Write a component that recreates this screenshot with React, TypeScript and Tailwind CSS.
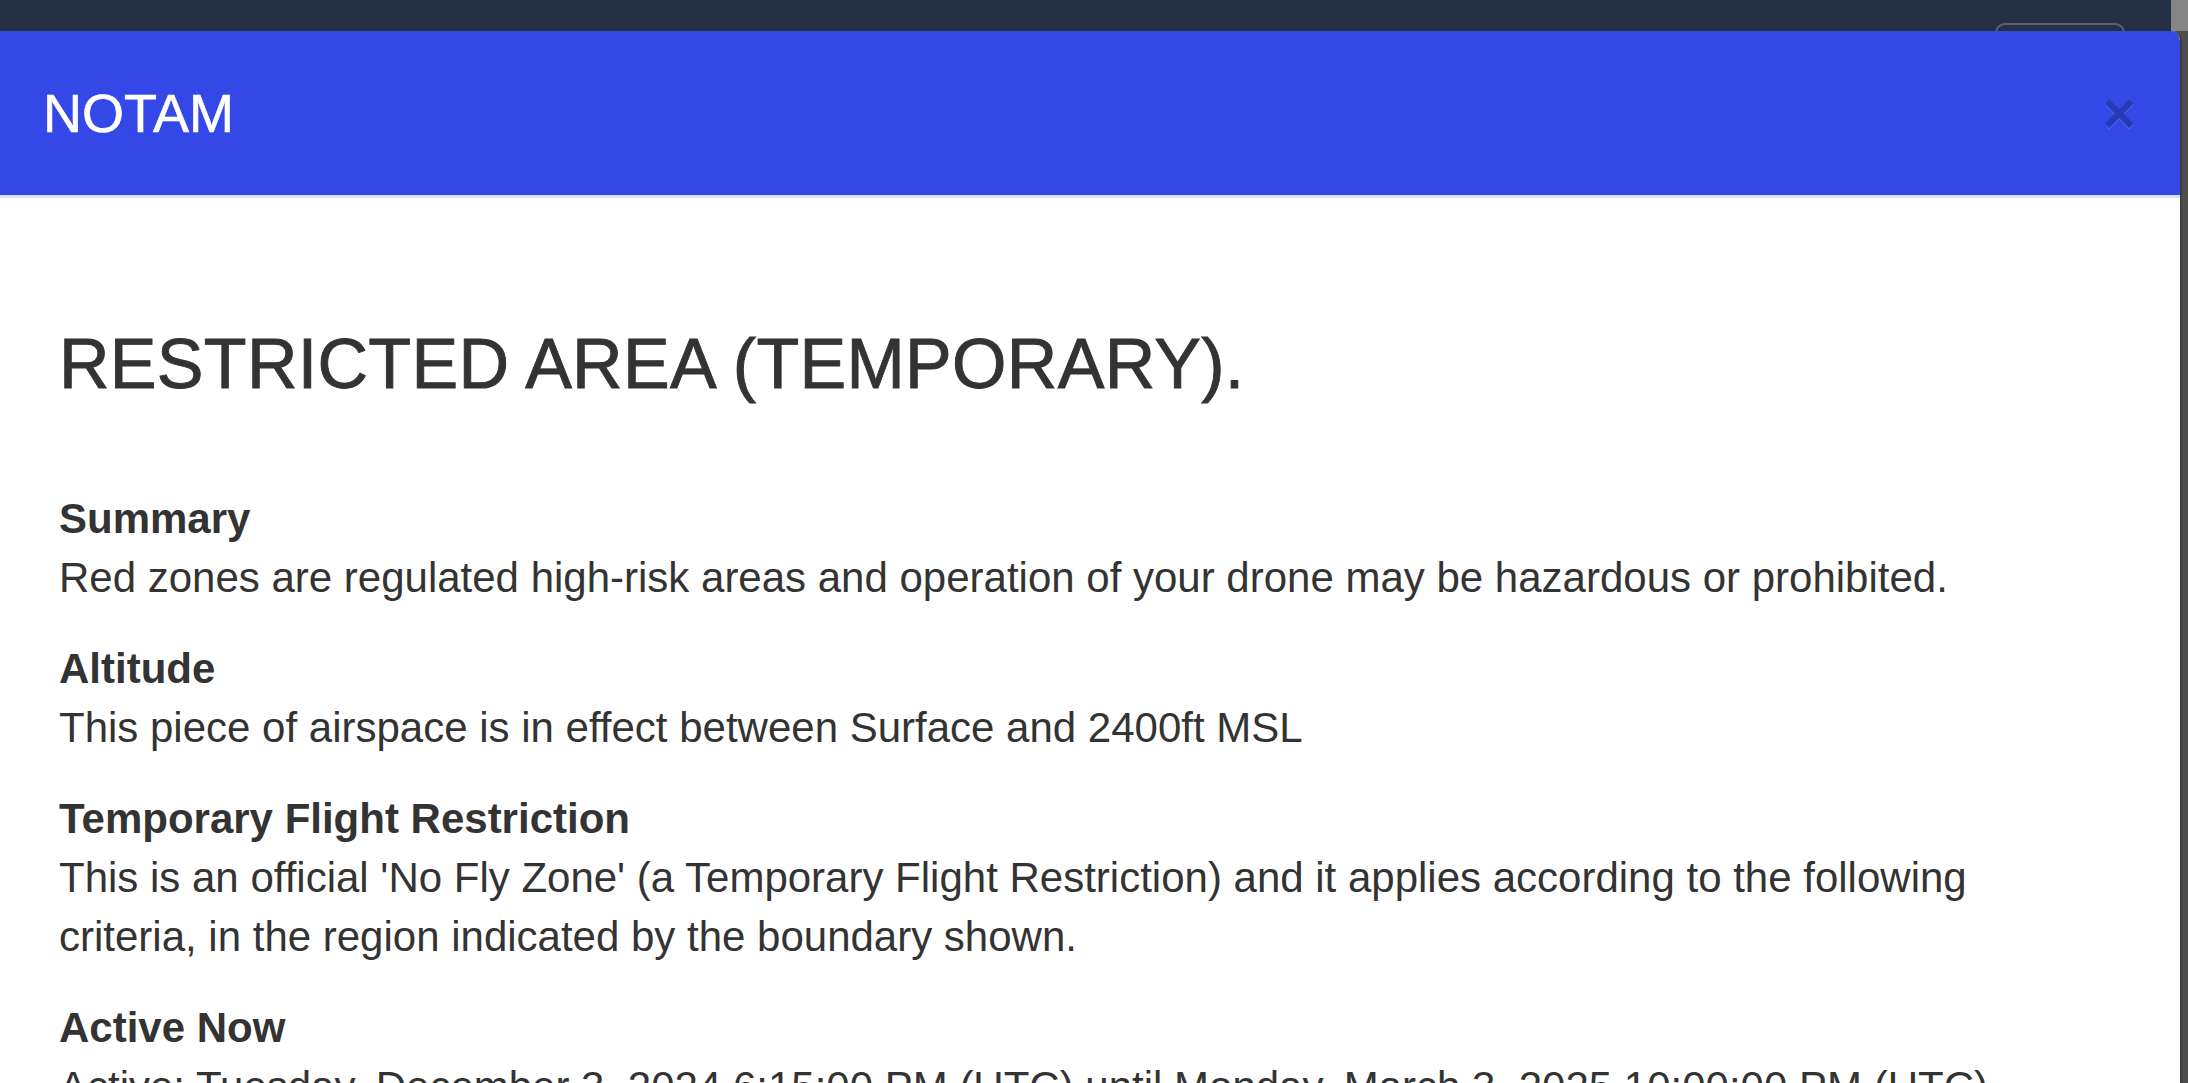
const sections = [
  {
    label: "Summary",
    text: "Red zones are regulated high-risk areas and operation of your drone may be hazardous or prohibited.",
  },
  {
    label: "Altitude",
    text: "This piece of airspace is in effect between Surface and 2400ft MSL",
  },
  {
    label: "Temporary Flight Restriction",
    text: "This is an official 'No Fly Zone' (a Temporary Flight Restriction) and it applies according to the following criteria, in the region indicated by the boundary shown.",
  },
  {
    label: "Active Now",
    text: "Active: Tuesday, December 3, 2024 6:15:00 PM (UTC) until Monday, March 3, 2025 10:00:00 PM (UTC)",
  },
];

export default function App() {
  return (
    <div className="h-[1083px] w-full overflow-hidden bg-[#4e4e4e] font-['Liberation_Sans',Arial,sans-serif] text-[#333]">
      {/* navbar behind the modal */}
      <div className="flex h-[31px] bg-[#263045]">
        <div className="flex flex-1 justify-end overflow-hidden pr-[46px] pt-[23px]">
          <div className="h-[40px] w-[130px] shrink-0 rounded-[10px] border-2 border-[#596174]" />
        </div>
        <div className="w-[17px] bg-[#858585]" />
      </div>

      <div className="flex">
        <div className="w-[2182px] overflow-hidden rounded-tr-[10px] border-r-2 border-[#3c3c3c] bg-white">
          <div className="flex h-[167px] items-center justify-between border-b-[3px] border-[#dde1f3] bg-[#3348e6] pl-[43px] pr-[44px]">
            <h4 className="text-[54px] font-normal leading-none text-white [-webkit-text-stroke:0.6px_#fff]">NOTAM</h4>
            <button className="text-[58px] font-bold leading-none text-black opacity-20 [text-shadow:0_1px_0_#fff]">
              ×
            </button>
          </div>

          <div className="px-[59px] pt-[128px]">
            <h1 className="text-[70px] font-normal leading-[77px] tracking-[0.3px] [-webkit-text-stroke:0.9px_#333]">
              RESTRICTED AREA (TEMPORARY).
            </h1>
            <div className="mt-[86px] flex max-w-[2000px] flex-col gap-[32px] text-[42px] leading-[59px]">
              {sections.map((s) => (
                <div key={s.label}>
                  <div className="font-bold">{s.label}</div>
                  <p>{s.text}</p>
                </div>
              ))}
            </div>
          </div>
        </div>
      </div>
    </div>
  );
}
